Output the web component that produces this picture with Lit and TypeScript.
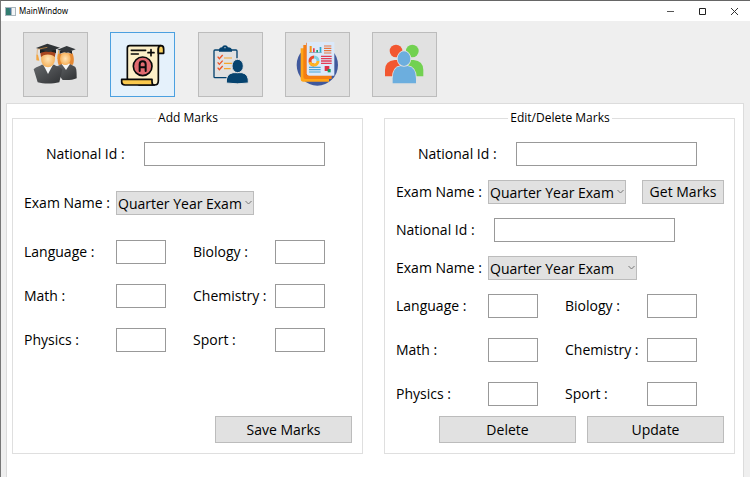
import { LitElement, html, css, svg, TemplateResult } from "lit";
import { customElement, property, state } from "lit/decorators.js";

const EXAMS = ["Quarter Year Exam", "Half Year Exam", "Final Exam"];

const students = svg`<svg viewBox="72 100 189 189" aria-hidden="true">
  <defs>
    <linearGradient id="gown" x1="0" y1="0" x2="1" y2="1"><stop offset="0" stop-color="#66696c"/><stop offset="1" stop-color="#303234"/></linearGradient>
    <radialGradient id="skin"><stop offset="0" stop-color="#ffe6ba"/><stop offset="1" stop-color="#f6b25c"/></radialGradient>
  </defs>
  <path d="M174 162c-2 14-2 25 2 34l43-1c4-10 3-22-1-34z" fill="#e58a35"/>
  <path d="M160 205l24-11h27l14 7c5 5 5 17 5 35-10 5-27 6-42 5z" fill="url(#gown)"/>
  <path d="M185 193l13 18 12-18-12-9z" fill="#f4f5f6"/>
  <ellipse cx="196" cy="177" rx="16" ry="19" fill="url(#skin)"/>
  <path d="M179 154v9c9-7 29-7 37 0v-9z" fill="#25282b"/>
  <path d="M172 150l28-11 27 10-27 10z" fill="#34383b"/>
  <path d="M176 152l-3 26" stroke="#efa63b" stroke-width="2.500"/>
  <path d="M101 209c3-6 16-8 24-14h38c8 6 20 7 24 14l-9 39c-20 5-48 5-65 0z" fill="url(#gown)"/>
  <path d="M130 195l14 28 15-28-15-8z" fill="#f6f7f8"/>
  <ellipse cx="144" cy="178" rx="21" ry="25" fill="url(#skin)"/>
  <path d="M121 159l2 14c4-11 36-12 41 0l3-14c-12-7-36-7-46 0z" fill="#a8451d"/>
  <path d="M120 149v12c14-7 35-7 48 0v-12z" fill="#1d2022"/>
  <path d="M108 145l34-13 38 12-34 13z" fill="#2f3336"/>
  <path d="M142 143l-30 6-1 17" fill="none" stroke="#e8a04b" stroke-width="2"/>
  <path d="M109 165h5l4 18-9-1z" fill="#f2a643"/>
</svg>`;

const certificate = svg`<svg viewBox="333 99 189 189" aria-hidden="true">
  <g stroke="#090909" stroke-width="5" stroke-linejoin="round" stroke-linecap="round">
    <path d="M382 238v-94q0-7 7-7h93q-7 3-7 11v94q0 13-12 13h-45z" fill="#fcefc7"/>
    <path d="M475 160v-13q0-10 8-10 8 0 8 10v13z" fill="#fbd25f"/>
    <path d="M365 238h91v7q0 10 7 10h-88q-10 0-10-9z" fill="#fbc94d"/>
    <path d="M394 151h43M394 162h21M444 158h18M453 149v18" fill="none"/>
    <circle cx="428" cy="199" r="28" fill="#e16b70"/>
    <path d="M419 213v-20q0-9 9-9t9 9v20M419 202h18" fill="none" stroke-width="6"/>
  </g>
</svg>`;

const checklist = svg`<svg viewBox="57 40 189 189" aria-hidden="true">
  <path d="M148 174h-43q-3 0-3-3v-77q0-3 3-3h63q3 0 3 3v22" fill="none" stroke="#06436f" stroke-width="4"/>
  <path d="M117 96v-5q0-7 9-8 2-6 9-6t9 6q11 1 12 8v5z" fill="#06436f"/>
  <circle cx="135" cy="84" r="2" fill="#e0e0e0"/>
  <path d="M113 111l5 6 10-11M113 128l5 6 10-11M113 144l5 6 10-11" fill="none" stroke="#ee5326" stroke-width="4"/>
  <path d="M132 115h24M132 131h24M132 147h20" stroke="#f5a52c" stroke-width="3.5"/>
  <path d="M139 190q-2-27 20-31h27q21 4 19 31-33 5-66 0z" fill="#06436f" stroke="#e0e0e0" stroke-width="3"/>
  <ellipse cx="173" cy="139" rx="17" ry="20" fill="#06436f" stroke="#e0e0e0" stroke-width="3"/>
</svg>`;

const reports = svg`<svg viewBox="319 40 189 189" aria-hidden="true">
  <circle cx="413" cy="136" r="62" fill="#40599d"/>
  <path d="M363 86h65v91h20v9h-78q-7 0-7-7z" fill="#ffa418"/>
  <path d="M371 76h68v91h17v11h-78q-7 0-7-7z" fill="#f47f13"/>
  <path d="M379 69h77v99h-71q-6 0-6-6z" fill="#ee650f"/>
  <path d="M381 67h83v101h-76q-7 0-7-7z" fill="#dbe9fa"/>
  <path d="M388 98h38v2h-38z" fill="#5d95b8"/>
  <path d="M390 79h6v19h-6z" fill="#f49319"/><path d="M400 86h5v12h-5z" fill="#e63b4e"/><path d="M410 91h5v7h-5z" fill="#14a16d"/><path d="M420 82h5v16h-5z" fill="#2ba6c8"/>
  <path d="M433 79h22M433 86h22M433 93h22M433 100h22" stroke="#e8753e" stroke-width="3.5"/>
  <g fill="none" stroke-width="9"><path d="M403 112a12 12 0 0 1 12 12" stroke="#83d0df"/><path d="M415 124a12 12 0 0 1-12 12" stroke="#ffb520"/><path d="M403 136a12 12 0 1 1 0-24" stroke="#eb492a"/><path d="M403 136a12 12 0 0 1-12-9" stroke="#ffb520"/></g>
  <path d="M424 110h32M424 117h32M424 124h32M424 131h32" stroke="#e23d55" stroke-width="4"/>
  <path d="M388 143h35M388 150h35M388 157h35" stroke="#4aa5d6" stroke-width="3.5"/>
  <path d="M435 139h14v15h-14z" fill="#dc3148"/><path d="M444 148h9v10h-9z" fill="#159b65"/>
</svg>`;

const group = svg`<svg viewBox="582 40 189 189" aria-hidden="true">
  <path d="M618 170v-19q0-27 29-30h20l-8 49z" fill="#f25730"/>
  <path d="M733 170v-19q0-27-29-30h-20l8 49z" fill="#72d151"/>
  <circle cx="651" cy="94" r="19" fill="#f25730"/>
  <circle cx="700" cy="94" r="19" fill="#72d151"/>
  <path d="M641 191v-15q0-33 24-37h21q25 4 25 37v15z" fill="#6caede" stroke="#e0e0e0" stroke-width="5" paint-order="stroke"/>
  <ellipse cx="675" cy="117" rx="19" ry="22" fill="#6caede" stroke="#e0e0e0" stroke-width="5" paint-order="stroke"/>
</svg>`;

const sections: { name: string; icon: TemplateResult | unknown }[] = [
  { name: "Students", icon: students },
  { name: "Marks", icon: certificate },
  { name: "Attendance", icon: checklist },
  { name: "Reports", icon: reports },
  { name: "Users", icon: group },
];

const controls = css`
  *, *::before { box-sizing: border-box; }
  button, input, select { font: inherit; color: inherit; margin: 0; border-radius: 0; }
  button { background: #e1e1e1; border: 1px solid #bcbcbc; padding: 0; }
  button:hover { background: #e5f1fb; border-color: #4ba0e0; }
`;

@customElement("exam-select")
class ExamSelect extends LitElement {
  @property() label = "";
  @property({ type: Boolean }) wide = false;
  static styles = [controls, css`
    :host { display: block; }
    .row { display: flex; align-items: center; height: 24px; }
    .label { width: 92px; flex: none; }
    .box { position: relative; width: 138px; }
    .wide { width: 149px; }
    .select {
      display: block; width: 100%; height: 24px; padding: 2px 0 0 1px; appearance: none;
      background: #e1e1e1; border: 1px solid #bcbcbc; line-height: 20px;
    }
    .arrow { position: absolute; right: 2px; top: 9px; width: 7px; height: 5px; pointer-events: none; }
  `];
  render() {
    return html`<div class="row">
      <label class="label" for="exam">${this.label}</label>
      <div class=${this.wide ? "box wide" : "box"}>
        <select class="select" id="exam">${EXAMS.map((e) => html`<option>${e}</option>`)}</select>
        <svg class="arrow" viewBox="0 0 7 5" aria-hidden="true"><path d="M.5 1l3 3 3-3" fill="none" stroke="#777"/></svg>
      </div>
    </div>`;
  }
}

@customElement("id-field")
class IdField extends LitElement {
  static styles = [controls, css`
    :host { display: block; }
    .row { display: flex; align-items: center; height: 24px; }
    .label { width: 98px; flex: none; }
    .input { width: 181px; height: 24px; border: 1px solid #999; background: #fff; padding: 0 3px; }
  `];
  render() {
    return html`<div class="row">
      <label class="label" for="nid">National Id :</label>
      <input class="input" id="nid" type="text" />
    </div>`;
  }
}

@customElement("marks-grid")
class MarksGrid extends LitElement {
  static styles = [controls, css`
    :host { display: block; }
    .grid { display: grid; grid-template-columns: 92px 77px 82px 50px; row-gap: 20px; align-items: center; }
    .input { width: 50px; height: 24px; border: 1px solid #999; background: #fff; padding: 0 3px; }
    .label { line-height: 24px; white-space: nowrap; }
  `];
  render() {
    const subjects = ["Language", "Biology", "Math", "Chemistry", "Physics", "Sport"];
    return html`<div class="grid">${subjects.map((s) => html`
      <label class="label" for=${s}>${s} :</label>
      <input class="input" id=${s} type="text" />`)}</div>`;
  }
}

@customElement("app-root")
class AppRoot extends LitElement {
  @state() private active = 1;
  static styles = [controls, css`
    :host {
      display: flex; flex-direction: column; min-height: 100vh; box-sizing: border-box;
      background: #efefef; color: #000; border-top: 1px solid #666; border-left: 1px solid #777;
      font: 14px/20px "Open Sans", "Noto Sans", sans-serif;
    }
    .titlebar { display: flex; align-items: center; height: 20px; padding: 0 10px 0 4px; background: #fff; }
    .appicon { width: 11px; height: 9px; margin-right: 3px; }
    .title { flex: 1; margin: 0; font: 400 8px/12px "Noto Sans", sans-serif; }
    .controls { display: flex; gap: 21px; }
    .control { width: 11px; height: 11px; border: 0; background: none; }
    .control svg { display: block; width: 11px; height: 11px; }
    .toolbar { display: flex; justify-content: space-between; width: 414px; margin: 11px 0 6px 22px; }
    .tool { width: 65px; height: 65px; }
    .tool svg { display: block; width: 63px; height: 63px; }
    .active { background: #e5f1fb; border-color: #4ba0e0; }
    .panel {
      flex: 1; display: grid; grid-template-columns: 1fr 1fr; column-gap: 21px; align-items: start;
      margin: 0 6px 0 5px; padding: 6px 8px 24px 5px;
      background: #fff; border: 1px solid #dcdcdc; border-bottom: 0;
    }
    .group { min-width: 0; margin: 0; padding: 0 10px 10px 11px; border: 1px solid #dfdfdf; }
    .legend { margin: 0 auto; padding: 0 2px; font-size: 12px; line-height: 16px; }
    .form { display: flex; flex-direction: column; min-height: 317px; padding-top: 16px; }
    .add { gap: 25px; }
    .edit { gap: 14px; }
    .indent { padding-left: 22px; }
    .lookup { display: flex; justify-content: space-between; }
    .get { width: 82px; height: 24px; line-height: 22px; }
    .actions { display: flex; justify-content: flex-end; gap: 11px; margin-top: auto; }
    .edit .actions { margin-top: -4px; }
    .action { width: 137px; height: 27px; }
  `];

  render() {
    return html`
      <header class="titlebar">
        <svg class="appicon" viewBox="0 0 11 9" aria-hidden="true">
          <path d="M0 0h11v9H0z" fill="#a9b5bd"/><path d="M1 1h5v7H1z" fill="#327d70"/><path d="M7 1h3v7H7z" fill="#f3f6f8"/><path d="M4 1h2v7z" fill="#4474a0"/>
        </svg>
        <h1 class="title">MainWindow</h1>
        <div class="controls">
          <button class="control" aria-label="Minimize"><svg viewBox="0 0 11 11"><path d="M2 5.5h7" stroke="#555"/></svg></button>
          <button class="control" aria-label="Maximize"><svg viewBox="0 0 11 11"><path d="M2.500 2.500h6v6h-6z" fill="none" stroke="#222"/></svg></button>
          <button class="control" aria-label="Close"><svg viewBox="0 0 11 11"><path d="M2 2l7 7M9 2l-7 7" stroke="#333"/></svg></button>
        </div>
      </header>
      <nav class="toolbar">
        ${sections.map((s, i) => html`<button class=${i === this.active ? "tool active" : "tool"} aria-label=${s.name}
          @click=${() => (this.active = i)}>${s.icon}</button>`)}
      </nav>
      <main class="panel">
        <fieldset class="group">
          <legend class="legend">Add Marks</legend>
          <div class="form add">
            <id-field class="indent"></id-field>
            <exam-select label="Exam Name :"></exam-select>
            <marks-grid></marks-grid>
            <div class="actions"><button class="action">Save Marks</button></div>
          </div>
        </fieldset>
        <fieldset class="group">
          <legend class="legend">Edit/Delete Marks</legend>
          <div class="form edit">
            <id-field class="indent"></id-field>
            <div class="lookup">
              <exam-select label="Exam Name :"></exam-select>
              <button class="get">Get Marks</button>
            </div>
            <id-field></id-field>
            <exam-select label="Exam Name :" wide></exam-select>
            <marks-grid></marks-grid>
            <div class="actions"><button class="action">Delete</button><button class="action">Update</button></div>
          </div>
        </fieldset>
      </main>`;
  }
}
